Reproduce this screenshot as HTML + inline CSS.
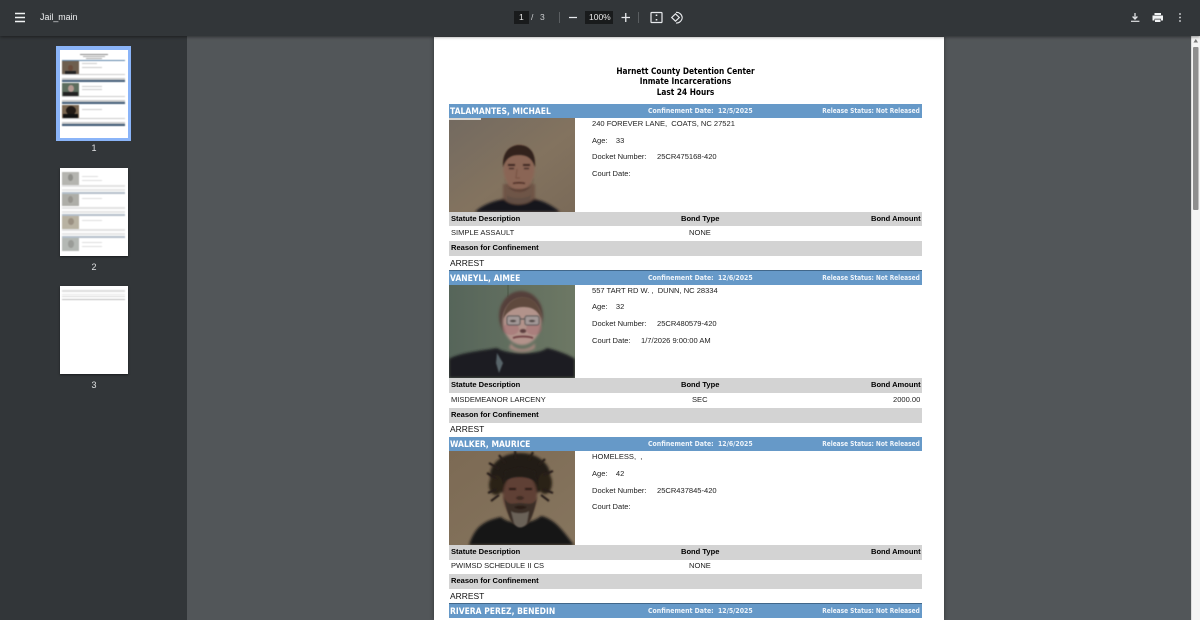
<!DOCTYPE html>
<html><head><meta charset="utf-8"><title>Jail_main</title>
<style>
html,body{margin:0;padding:0;width:1200px;height:620px;overflow:hidden;background:#525659}
*{box-sizing:border-box}
#w{position:relative;width:1200px;height:620px;overflow:hidden;background:#525659;filter:blur(.25px)}
.t,.b,.g,.h{position:absolute;white-space:pre}
#top{position:absolute;left:0;top:0;width:1200px;height:36px;background:#323639;box-shadow:0 1px 3px rgba(0,0,0,.45);z-index:3}
#side{position:absolute;left:0;top:36px;width:187px;height:584px;background:#323639}
#page{position:absolute;left:434px;top:37px;width:510px;height:583px;background:#fff;box-shadow:0 0 4px rgba(0,0,0,.4)}
#sb{position:absolute;left:1191px;top:35px;width:9px;height:585px;background:#f4f4f4;border-left:1px solid #ddd}
.tb{color:#eaeaea;font:9px "Liberation Sans",sans-serif;position:absolute;white-space:pre}
.h{font:bold 9px "DejaVu Sans",sans-serif;color:#000;left:434px;width:503px;text-align:center;height:11px;line-height:11px;transform:scaleX(.82)}
.b{left:449px;width:473px;height:13.5px;background:#6699c8;color:#fff;font-family:"DejaVu Sans",sans-serif;font-weight:bold}
.b.d{border-top:1.5px solid #41678a;height:14.5px}
.b i{position:absolute;font-style:normal;white-space:pre}
.b .n{left:1px;bottom:0;font-size:8.6px;line-height:12px;transform:scaleX(.886);transform-origin:0 50%}
.b .cd{left:199px;bottom:1px;font-size:6.9px;line-height:11px;color:#eef4fa;transform:scaleX(.9);transform-origin:0 50%}
.b .rs{right:2px;bottom:1px;font-size:6.9px;line-height:11px;color:#eef4fa;transform:scaleX(.85);transform-origin:100% 50%}
.g{left:449px;width:473px;background:#d3d3d3}
.t{font:7.55px/11px "Liberation Sans",sans-serif;color:#222}
.s{font-weight:bold;color:#000}
.ar{font-size:8.45px;color:#111}
.photo{position:absolute;left:449px;width:126px;height:94px}
.th{position:absolute;left:60px;width:68px;height:88px;background:#fff;box-shadow:0 1px 2px rgba(0,0,0,.5);overflow:hidden}
.th>section{position:absolute;inset:0;filter:blur(.45px)}
.th div{position:absolute}
.lb{position:absolute;left:87px;width:14px;text-align:center;color:#dfe1e2;font:9px "Liberation Sans",sans-serif}
</style></head><body>
<div id="w">
<div id="side"></div>
<div id="page"></div>

<div id="top">
<svg style="position:absolute;left:0;top:0" width="1200" height="36" fill="none">
<path d="M15 13.5H25M15 17.5H25M15 21.5H25" stroke="#f1f3f4" stroke-width="1.4"/>
<path d="M559.5 12V23M638.5 12V23" stroke="#5a5e61" stroke-width="1"/>
<rect x="514" y="11" width="15" height="13" fill="#191b1c"/>
<rect x="585" y="11" width="28" height="13" fill="#191b1c"/>
<path d="M569 17.5H577M621.5 17.5H630M625.75 13V22" stroke="#e8eaed" stroke-width="1.3"/>
<rect x="651" y="12.5" width="11" height="10" rx=".8" stroke="#e8eaed" stroke-width="1.2"/>
<path d="M656.5 14.5V16M656.5 19V20.5" stroke="#e8eaed" stroke-width="1.6"/>
<path d="M671.7 17.5L675.5 13.8L679.3 17.5L675.5 21.2Z" stroke="#e8eaed" stroke-width="1.2"/>
<path d="M676 12.4A5.6 5.6 0 0 1 682.2 17.5A5.8 5.8 0 0 1 676 23" stroke="#e8eaed" stroke-width="1.1"/>
<path d="M1135 13V18.5M1132.6 16.5L1135 19L1137.4 16.5" stroke="#e0e2e4" stroke-width="1.3"/>
<path d="M1131 21.3H1139.4" stroke="#e0e2e4" stroke-width="1.2"/>
<path d="M1154.5 13H1161V15H1154.5Z" fill="#f1f3f4"/>
<path d="M1152.5 15.5H1163V20.5H1161V18.8H1154.5V20.5H1152.5Z" fill="#f1f3f4"/>
<path d="M1155 19.5H1160.5V22H1155Z" fill="#f1f3f4"/>
<path d="M1180 13.2V14.8M1180 16.7V18.3M1180 20.2V21.8" stroke="#e8eaed" stroke-width="1.5"/>
</svg>
<span class="tb" style="left:40px;top:12px;font-size:8.9px;color:#eef0f1">Jail_main</span>
<span class="tb" style="left:519px;top:12px;font-size:8.5px">1</span>
<span class="tb" style="left:531px;top:12px;font-size:8.5px;color:#cfd1d3">/</span>
<span class="tb" style="left:540px;top:12px;font-size:8.5px;color:#cfd1d3">3</span>
<span class="tb" style="left:589px;top:12px;font-size:8.5px">100%</span>
</div>

<!-- Sidebar thumbnails -->
<div style="position:absolute;left:56px;top:46px;width:75px;height:95px;background:#8ab4f8"></div>
<div class="th" style="top:50px;box-shadow:none"><section>
<div style="left:20px;top:4px;width:28px;height:1px;background:#888"></div>
<div style="left:23px;top:6px;width:22px;height:1px;background:#aaa"></div>
<div style="left:26px;top:8px;width:16px;height:1px;background:#aaa"></div>
<div style="left:2px;top:9.5px;width:63px;height:1.6px;background:#5f86aa"></div>
<div style="left:2px;top:11px;width:17px;height:12.5px;background:#6e5f4f"></div>
<div style="left:8px;top:15px;width:5px;height:6px;border-radius:50%;background:#6b4c3c"></div>
<div style="left:5px;top:21px;width:11px;height:2.5px;background:#222"></div>
<div style="left:22px;top:13px;width:15px;height:1px;background:#ccc"></div>
<div style="left:22px;top:17px;width:20px;height:1px;background:#ccc"></div>
<div style="left:2px;top:23.5px;width:63px;height:1.5px;background:#ccc"></div>
<div style="left:2px;top:28px;width:63px;height:1.5px;background:#ccc"></div>
<div style="left:2px;top:30.3px;width:63px;height:1.6px;background:#46607a"></div>
<div style="left:2px;top:33px;width:17px;height:12.5px;background:#5d6d5e"></div>
<div style="left:8px;top:35px;width:6px;height:7px;border-radius:50%;background:#b59a92"></div>
<div style="left:3px;top:42px;width:15px;height:3.5px;background:#222"></div>
<div style="left:22px;top:36px;width:20px;height:1px;background:#ccc"></div>
<div style="left:22px;top:39px;width:20px;height:1px;background:#ccc"></div>
<div style="left:2px;top:45.5px;width:63px;height:1.5px;background:#ccc"></div>
<div style="left:2px;top:50px;width:63px;height:1.5px;background:#ccc"></div>
<div style="left:2px;top:52px;width:63px;height:1.6px;background:#46607a"></div>
<div style="left:2px;top:55px;width:17px;height:12.5px;background:#7a6650"></div>
<div style="left:6px;top:55.5px;width:10px;height:9px;border-radius:50%;background:#221a15"></div>
<div style="left:3px;top:64px;width:15px;height:3.5px;background:#111"></div>
<div style="left:22px;top:59px;width:20px;height:1px;background:#ccc"></div>
<div style="left:2px;top:67.5px;width:63px;height:1.5px;background:#ccc"></div>
<div style="left:2px;top:72px;width:63px;height:1.5px;background:#ccc"></div>
<div style="left:2px;top:74.3px;width:63px;height:1.6px;background:#3f5a76"></div>
</section></div>
<span class="lb" style="top:143px">1</span>

<div class="th" style="top:168px"><section>
<div style="left:2px;top:4px;width:17px;height:12.5px;background:#b5b5b0"></div>
<div style="left:8px;top:6px;width:5px;height:7px;border-radius:50%;background:#8f8f8a"></div>
<div style="left:22px;top:8px;width:16px;height:1px;background:#ddd"></div>
<div style="left:22px;top:12px;width:20px;height:1px;background:#ddd"></div>
<div style="left:2px;top:17px;width:63px;height:1.5px;background:#e2e2e2"></div>
<div style="left:2px;top:21px;width:63px;height:1.5px;background:#e6e6e6"></div>
<div style="left:2px;top:24px;width:63px;height:1.6px;background:#b4bfca"></div>
<div style="left:2px;top:25.5px;width:17px;height:12.5px;background:#aeaea8"></div>
<div style="left:8px;top:28px;width:5px;height:7px;border-radius:50%;background:#96948e"></div>
<div style="left:22px;top:30px;width:20px;height:1px;background:#ddd"></div>
<div style="left:2px;top:39px;width:63px;height:1.5px;background:#e2e2e2"></div>
<div style="left:2px;top:43px;width:63px;height:1.5px;background:#e6e6e6"></div>
<div style="left:2px;top:46px;width:63px;height:1.6px;background:#b4bfca"></div>
<div style="left:2px;top:48px;width:17px;height:12.5px;background:#b8b2a2"></div>
<div style="left:8px;top:50px;width:6px;height:7px;border-radius:50%;background:#9a9082"></div>
<div style="left:22px;top:52px;width:20px;height:1px;background:#ddd"></div>
<div style="left:2px;top:61px;width:63px;height:1.5px;background:#e2e2e2"></div>
<div style="left:2px;top:65px;width:63px;height:1.5px;background:#e6e6e6"></div>
<div style="left:2px;top:68px;width:63px;height:1.6px;background:#b4bfca"></div>
<div style="left:2px;top:70px;width:17px;height:13px;background:#b4b8b4"></div>
<div style="left:8px;top:72px;width:6px;height:8px;border-radius:50%;background:#9a9c98"></div>
<div style="left:22px;top:74px;width:20px;height:1px;background:#ddd"></div>
<div style="left:22px;top:78px;width:20px;height:1px;background:#ddd"></div>
</section></div>
<span class="lb" style="top:262px">2</span>

<div class="th" style="top:286px"><section>
<div style="left:2px;top:4px;width:63px;height:2px;background:#ddd"></div>
<div style="left:2px;top:7.5px;width:63px;height:1px;background:#e8e8e8"></div>
<div style="left:2px;top:9.5px;width:63px;height:1.5px;background:#d8d8d8"></div>
<div style="left:2px;top:12.5px;width:63px;height:1px;background:#bbb"></div>
</section></div>
<span class="lb" style="top:380px">3</span>

<!-- Page header -->
<div class="h" style="top:67px">Harnett County Detention Center</div>
<div class="h" style="top:77px">Inmate Incarcerations</div>
<div class="h" style="top:87.5px">Last 24 Hours</div>

<!-- Record 1 -->
<div class="b" style="top:104px"><i class="n">TALAMANTES, MICHAEL</i><i class="cd">Confinement Date:  12/5/2025</i><i class="rs">Release Status: Not Released</i></div>
<svg class="photo" style="top:118px" viewBox="0 0 126 94">
<defs>
<filter id="f1" x="-20%" y="-20%" width="140%" height="140%"><feGaussianBlur stdDeviation="1.4"/></filter>
<filter id="f2" x="-20%" y="-20%" width="140%" height="140%"><feGaussianBlur stdDeviation=".8"/></filter>
<linearGradient id="p1" x1="0" x2="1" y1="0" y2="1"><stop offset="0" stop-color="#736a60"/><stop offset=".55" stop-color="#83735f"/><stop offset="1" stop-color="#7a6a58"/></linearGradient>
<linearGradient id="p2" x1="0" x2="1" y1="0" y2="0"><stop offset="0" stop-color="#56655a"/><stop offset="1" stop-color="#6d7864"/></linearGradient>
<linearGradient id="p3" x1="0" x2="1" y1="0" y2="1"><stop offset="0" stop-color="#7c6a54"/><stop offset="1" stop-color="#86755e"/></linearGradient>
</defs>
<rect width="126" height="94" fill="url(#p1)"/>
<g filter="url(#f1)">
<path d="M54 66V80L26 94H112L86 80V66Z" fill="#6e5446"/>
<path d="M26 94C33 87 44 83 55 81C62 88 76 88 85 81C95 83 104 88 111 94Z" fill="#15151a"/>
<ellipse cx="70" cy="50" rx="15.5" ry="23" fill="#8a6554"/>
</g>
<g filter="url(#f2)">
<path d="M54 49C53 33 62 27 70 27C81 27 87 35 86 49C83 40 78 37 70 37C62 37 57 40 54 49Z" fill="#33221c"/>
<path d="M59 47H66M74 47H81" stroke="#35231c" stroke-width="1.8"/>
<path d="M60 50.5H65M75 50.5H80" stroke="#3a2820" stroke-width="1.3"/>
<path d="M68 51L67 60H71" stroke="#6c4737" fill="none" opacity=".7"/>
<path d="M64 65.5C67 64.5 73 64.5 76 65.5" stroke="#4b2c22" stroke-width="1.4" fill="none"/>
<path d="M55 60C58 71 64 74 70 74C76 74 83 71 85 60L82 68C75 72 64 72 58 68Z" fill="#3f2c25" opacity=".5"/>
<path d="M58 77C63 81 76 81 82 77L81 83C76 86 63 86 58 83Z" fill="#4f443c" opacity=".4"/>
</g>
<rect x="0" y="0" width="32" height="2" fill="#d9d6d2"/>
</svg>
<div class="t" style="left:592px;top:118px">240 FOREVER LANE,  COATS, NC 27521</div>
<div class="t" style="left:592px;top:135px">Age:    33</div>
<div class="t" style="left:592px;top:151px">Docket Number:</div><div class="t" style="left:657px;top:151px">25CR475168-420</div>
<div class="t" style="left:592px;top:168px">Court Date:</div>
<div class="g" style="top:212px;height:14px"></div>
<div class="t s" style="left:451px;top:213px">Statute Description</div><div class="t s" style="left:681px;top:213px">Bond Type</div><div class="t s" style="left:871px;top:213px">Bond Amount</div>
<div class="t" style="left:451px;top:227px">SIMPLE ASSAULT</div><div class="t" style="left:689px;top:227px">NONE</div>
<div class="g" style="top:241px;height:15px"></div>
<div class="t s" style="left:451px;top:242px">Reason for Confinement</div>
<div class="t ar" style="left:450px;top:258px">ARREST</div>

<!-- Record 2 -->
<div class="b d" style="top:270px"><i class="n">VANEYLL, AIMEE</i><i class="cd">Confinement Date:  12/6/2025</i><i class="rs">Release Status: Not Released</i></div>
<svg class="photo" style="top:285px;height:93px" viewBox="0 0 126 93">
<rect width="126" height="93" fill="url(#p2)"/>
<rect x="58" y="0" width="2" height="12" fill="#4d5a4a" opacity=".6"/>
<g filter="url(#f1)">
<path d="M0 74C10 68 30 66 48 63C58 70 90 70 98 63C110 66 120 70 126 74V93H0Z" fill="#1d1e20"/>
<ellipse cx="72" cy="31" rx="22" ry="25" fill="#55413a"/>
<ellipse cx="73" cy="37" rx="19" ry="23" fill="#b2938b"/>
<path d="M62 58C66 66 80 66 86 58L86 63C80 68 66 68 60 63Z" fill="#a3857d"/>
</g>
<g filter="url(#f2)">
<path d="M48 68L54 78L50 88L47 78Z" fill="#59656a"/>
<path d="M54 34C55 20 64 12 74 12C84 12 91 20 93 34C88 24 82 22 74 22C66 22 58 26 54 34Z" fill="#5f4a3c"/>
<ellipse cx="62" cy="44" rx="8" ry="6" fill="#9c5a60" opacity=".35"/>
<ellipse cx="85" cy="44" rx="8" ry="6" fill="#9c5a60" opacity=".35"/>
<rect x="58" y="31" width="13" height="9" rx="2" fill="#a39897" stroke="#4a4a4a" stroke-width="1"/>
<rect x="76" y="31" width="14" height="9" rx="2" fill="#a39897" stroke="#4a4a4a" stroke-width="1"/>
<path d="M71 34H76" stroke="#4a4a4a" stroke-width="1"/>
<ellipse cx="64" cy="36" rx="3.2" ry="1.3" fill="#4a3f3d"/>
<ellipse cx="83" cy="36" rx="3.2" ry="1.3" fill="#4a3f3d"/>
<ellipse cx="74" cy="46" rx="3.2" ry="2" fill="#5b3e3c"/>
<path d="M64 53C69 51 79 51 84 53" stroke="#6b3b3e" stroke-width="1.8" fill="none"/>
</g>
</svg>
<div class="t" style="left:592px;top:285px">557 TART RD W. ,  DUNN, NC 28334</div>
<div class="t" style="left:592px;top:301px">Age:    32</div>
<div class="t" style="left:592px;top:318px">Docket Number:</div><div class="t" style="left:657px;top:318px">25CR480579-420</div>
<div class="t" style="left:592px;top:335px">Court Date:</div><div class="t" style="left:641px;top:335px">1/7/2026 9:00:00 AM</div>
<div class="g" style="top:378px;height:15px"></div>
<div class="t s" style="left:451px;top:379px">Statute Description</div><div class="t s" style="left:681px;top:379px">Bond Type</div><div class="t s" style="left:871px;top:379px">Bond Amount</div>
<div class="t" style="left:451px;top:393.5px">MISDEMEANOR LARCENY</div><div class="t" style="left:692px;top:393.5px">SEC</div><div class="t" style="left:893px;top:393.5px">2000.00</div>
<div class="g" style="top:408px;height:15px"></div>
<div class="t s" style="left:451px;top:408.5px">Reason for Confinement</div>
<div class="t ar" style="left:450px;top:424px">ARREST</div>

<!-- Record 3 -->
<div class="b" style="top:437px"><i class="n">WALKER, MAURICE</i><i class="cd">Confinement Date:  12/6/2025</i><i class="rs">Release Status: Not Released</i></div>
<svg class="photo" style="top:451px" viewBox="0 0 126 94">
<rect width="126" height="94" fill="url(#p3)"/>
<g filter="url(#f1)">
<path d="M20 94C26 76 34 70 52 66C60 74 82 74 92 65C106 68 114 80 125 94Z" fill="#151314"/>
<ellipse cx="71" cy="24" rx="30" ry="22" fill="#221a15"/>
<ellipse cx="47" cy="34" rx="7" ry="10" fill="#2a2019"/>
<ellipse cx="96" cy="32" rx="7" ry="11" fill="#2a2019"/>
<ellipse cx="71" cy="44" rx="17" ry="23" fill="#5e4034"/>
</g>
<g filter="url(#f2)">
<path d="M38 22L48 28M40 12L50 18M50 4L56 12M66 0L67 8M84 1L80 9M96 8L90 14M104 20L94 24M39 42L48 38M104 42L94 38M42 50L50 44M100 50L92 44" stroke="#251c16" stroke-width="2.2"/>
<path d="M54 32C60 24 81 24 88 32L86 20L71 16L56 20Z" fill="#221a15"/>
<path d="M60 38H67M76 38H83" stroke="#2a1a15" stroke-width="2"/>
<ellipse cx="71" cy="47" rx="4" ry="2" fill="#402a22"/>
<path d="M55 46C57 55 58 62 62 70C66 78 78 78 81 70C85 62 86 55 88 46C85 56 77 52 71 52C65 52 59 56 55 46Z" fill="#3a2e27"/>
<path d="M62 60C65 63 77 63 80 60L78 72C74 78 68 78 65 72Z" fill="#6a6258"/>
<path d="M65 56C69 54 74 54 78 56C75 59 68 59 65 56Z" fill="#2a1c18"/>
</g>
</svg>
<div class="t" style="left:592px;top:451px">HOMELESS,  ,</div>
<div class="t" style="left:592px;top:468px">Age:    42</div>
<div class="t" style="left:592px;top:484.5px">Docket Number:</div><div class="t" style="left:657px;top:484.5px">25CR437845-420</div>
<div class="t" style="left:592px;top:501px">Court Date:</div>
<div class="g" style="top:545px;height:14.5px"></div>
<div class="t s" style="left:451px;top:546px">Statute Description</div><div class="t s" style="left:681px;top:546px">Bond Type</div><div class="t s" style="left:871px;top:546px">Bond Amount</div>
<div class="t" style="left:451px;top:560px">PWIMSD SCHEDULE II CS</div><div class="t" style="left:689px;top:560px">NONE</div>
<div class="g" style="top:574px;height:15px"></div>
<div class="t s" style="left:451px;top:575px">Reason for Confinement</div>
<div class="t ar" style="left:450px;top:591px">ARREST</div>

<!-- Record 4 -->
<div class="b d" style="top:603px"><i class="n">RIVERA PEREZ, BENEDIN</i><i class="cd">Confinement Date:  12/5/2025</i><i class="rs">Release Status: Not Released</i></div>

<!-- Scrollbar -->
<div id="sb"></div>
<svg style="position:absolute;left:1191px;top:35px" width="9" height="180">
<path d="M4.8 4L2.5 7.5H7Z" fill="#777"/>
<rect x="2" y="12" width="5.5" height="163" rx="1" fill="#8e8e8e"/>
</svg>
</div>
</body></html>
